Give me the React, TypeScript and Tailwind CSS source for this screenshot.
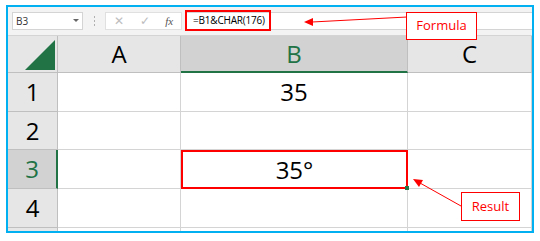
const font = { fontFamily: '"Open Sans", "Noto Sans", sans-serif' };

function Corner() {
  return (
    <div className="relative border-r border-b border-[#bfbfbf] bg-[#e6e6e6]">
      <svg width="50" height="37" className="absolute left-0 top-0">
        <polygon points="17,34 47,4 47,34" fill="#217346" />
      </svg>
    </div>
  );
}

function ColHead({ label, active }: { label: string; active?: boolean }) {
  return (
    <div
      className={
        "flex items-center justify-center border-r border-[#bfbfbf] text-[24px] " +
        (active ? "bg-[#d2d2d2] text-[#217346] border-b-2 border-b-[#217346]" : "bg-[#e6e6e6] text-black border-b border-b-[#bfbfbf]")
      }
    >
      {label}
    </div>
  );
}

function RowHead({ n, active }: { n?: number; active?: boolean }) {
  return (
    <div
      className={
        "flex items-center justify-center border-b border-[#bfbfbf] text-[24px] " +
        (active ? "bg-[#d2d2d2] text-[#217346] border-r-2 border-r-[#217346]" : "bg-[#e6e6e6] text-black border-r border-r-[#bfbfbf]")
      }
    >
      {n}
    </div>
  );
}

function Cell({ children }: { children?: React.ReactNode }) {
  return (
    <div className="flex items-center justify-center border-r border-b border-[#d4d4d4] bg-white text-[24px] text-black">
      {children}
    </div>
  );
}

export default function App() {
  return (
    <div className="relative w-[540px] h-[241px] bg-white pt-[5px] pl-[6px]" style={font}>
      <div className="w-[528px] h-[228px] border-2 border-[#00b0f0] overflow-hidden bg-[#f3f3f3]">
        {/* Formula bar */}
        <div className="flex items-center h-[29px] pl-[4px] border-b border-[#d4d4d4]">
          <div className="flex items-center justify-between w-[71px] h-[18px] bg-white border border-[#d4d4d4] px-[3px] text-[10px] text-[#333]">
            <span>B3</span>
            <svg width="6" height="4"><polygon points="0,0 6,0 3,3" fill="#666" /></svg>
          </div>
          <div className="w-[22px] flex justify-center">
            <div className="flex flex-col gap-[2px]">
              <span className="w-[1px] h-[2px] bg-[#b0b0b0]" />
              <span className="w-[1px] h-[2px] bg-[#b0b0b0]" />
              <span className="w-[1px] h-[2px] bg-[#b0b0b0]" />
            </div>
          </div>
          <div className="flex items-center justify-around w-[77px] h-[18px] bg-white border border-[#e0e0e0] text-[#bdbdbd] text-[12px]">
            <span>✕</span>
            <span>✓</span>
            <span className="italic text-[#555] text-[11px]" style={{ fontFamily: '"Liberation Serif", serif' }}>fx</span>
          </div>
          <div className="ml-[3px] flex-1 h-[18px] bg-white border-y border-[#d4d4d4]" />
        </div>

        {/* Grid */}
        <div className="grid grid-cols-[50px_123px_227px_124px] grid-rows-[37px_39px_38px_39px_39px_10px]">
          <Corner />
          <ColHead label="A" />
          <ColHead label="B" active />
          <ColHead label="C" />

          <RowHead n={1} />
          <Cell />
          <Cell>35</Cell>
          <Cell />

          <RowHead n={2} />
          <Cell />
          <Cell />
          <Cell />

          <RowHead n={3} active />
          <Cell />
          <div className="relative flex items-center justify-center border-2 border-[#ff0000] bg-white text-[24px] text-black">
            35°
            <span className="absolute right-[-3px] bottom-[-3px] w-[4px] h-[4px] bg-[#217346]" />
          </div>
          <Cell />

          <RowHead n={4} />
          <Cell />
          <Cell />
          <Cell />

          <RowHead />
          <Cell />
          <Cell />
          <Cell />
        </div>
      </div>

      {/* Annotations */}
      <div className="absolute left-[185px] top-[10px] w-[86px] h-[21px] border-2 border-[#ff0000] flex items-center pl-[6px] text-[10px] tracking-[-0.2px] text-black whitespace-nowrap">
        =B1&amp;CHAR(176)
      </div>
      <svg width="540" height="241" className="absolute left-0 top-0 pointer-events-none">
        <line x1="407" y1="17" x2="312" y2="22" stroke="#ff0000" strokeWidth="1" />
        <polygon points="304,22 313,18 313,26" fill="#ff0000" />
        <line x1="461" y1="206" x2="420" y2="183" stroke="#ff0000" strokeWidth="1" />
        <polygon points="413,179 423,180 419,187" fill="#ff0000" />
      </svg>
      <div className="absolute left-[406px] top-[12px] w-[71px] h-[28px] border border-[#ff0000] bg-white flex items-center justify-center text-[13px] text-[#ff0000]">
        Formula
      </div>
      <div className="absolute left-[461px] top-[192px] w-[59px] h-[29px] border border-[#ff0000] bg-white flex items-center justify-center text-[13px] text-[#ff0000]">
        Result
      </div>
    </div>
  );
}
